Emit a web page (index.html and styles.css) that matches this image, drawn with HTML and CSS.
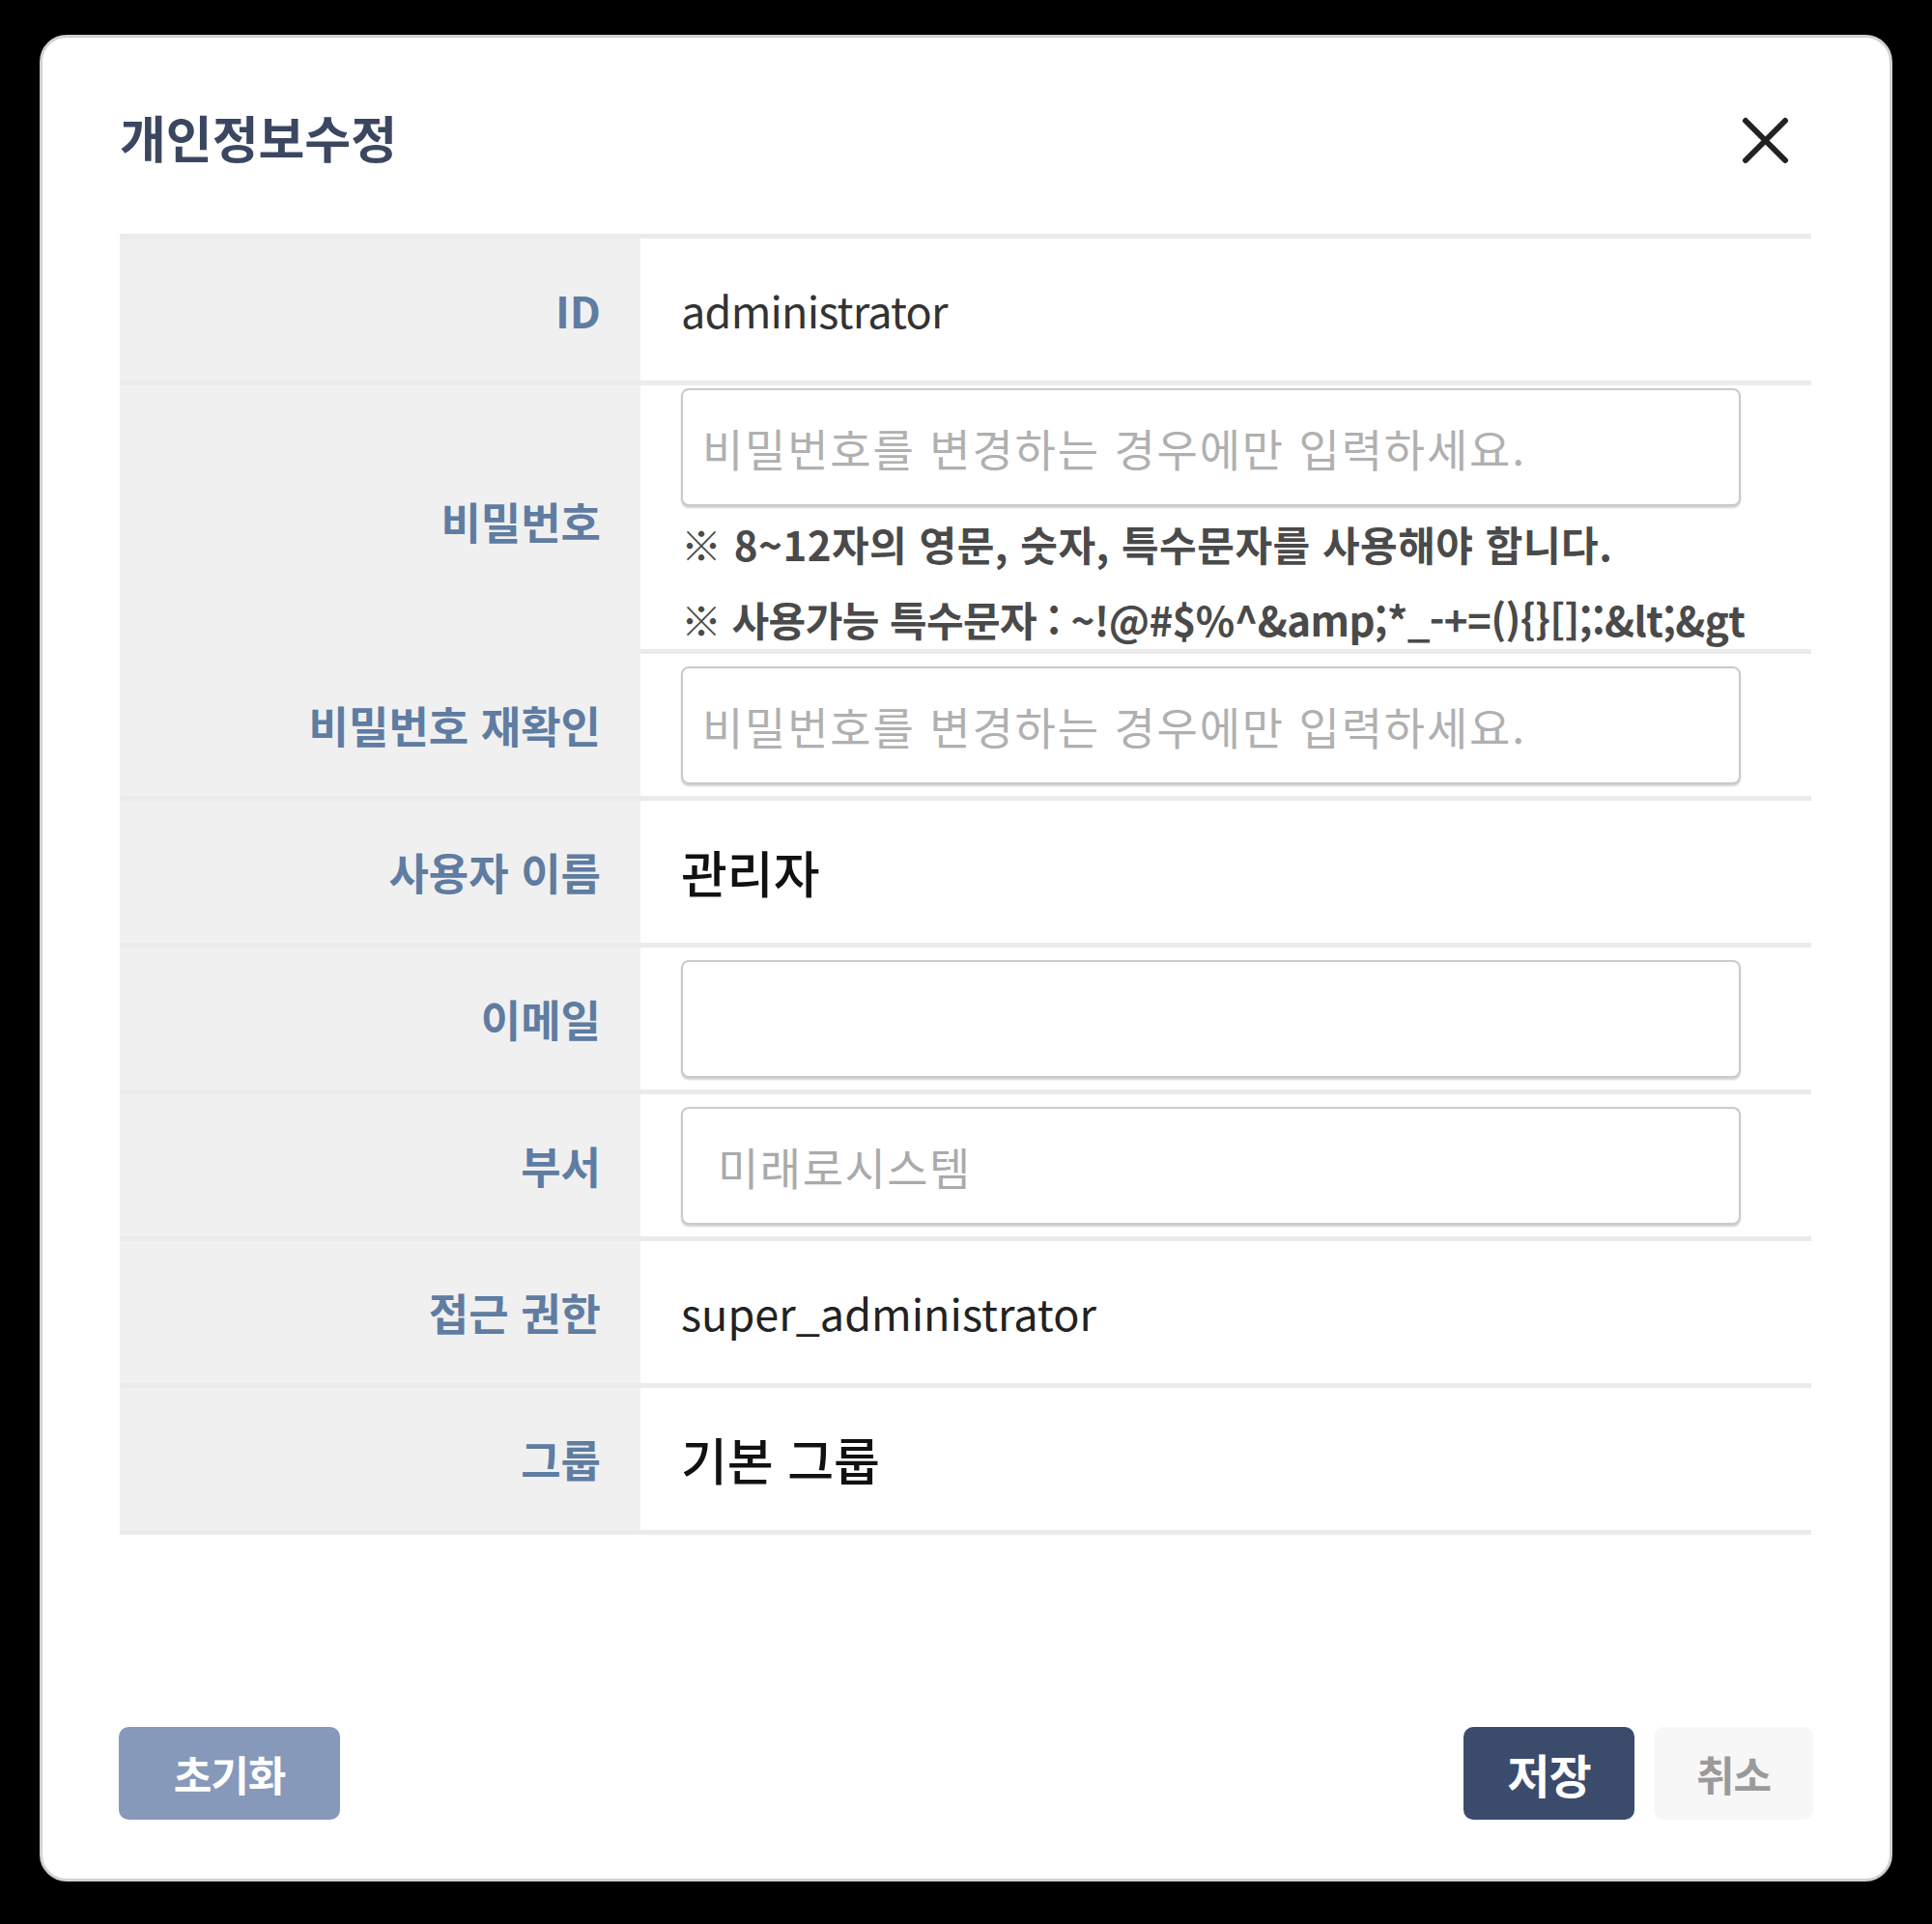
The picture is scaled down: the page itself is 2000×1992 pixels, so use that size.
FILE: index.html
```html
<!DOCTYPE html>
<html lang="ko">
<head>
<meta charset="utf-8">
<title>개인정보수정</title>
<link rel="stylesheet" href="styles.css">
</head>
<body>
<div class="modal">
  <div class="modal-header">
    <h1 class="modal-title">개인정보수정</h1>
    <button class="close-btn" type="button" aria-label="닫기">
      <svg viewBox="0 0 49 49" width="49" height="49"><path d="M4 4 L45 45 M45 4 L4 45" stroke="#222" stroke-width="6" stroke-linecap="round" fill="none"/></svg>
    </button>
  </div>
  <div class="form-table">
    <div class="row">
      <div class="label">ID</div>
      <div class="value"><span class="text-plain">administrator</span></div>
    </div>
    <div class="row row-tall">
      <div class="label">비밀번호</div>
      <div class="value value-stack">
        <input class="field" type="password" placeholder="비밀번호를 변경하는 경우에만 입력하세요.">
        <p class="help">※ 8~12자의 영문, 숫자, 특수문자를 사용해야 합니다.</p>
        <p class="help help-symbols">※ 사용가능 특수문자 : ~!@#$%^&amp;amp;*_-+=(){}[];:&amp;lt;&amp;gt</p>
      </div>
    </div>
    <div class="row">
      <div class="label">비밀번호 재확인</div>
      <div class="value"><input class="field" type="password" placeholder="비밀번호를 변경하는 경우에만 입력하세요."></div>
    </div>
    <div class="row">
      <div class="label">사용자 이름</div>
      <div class="value"><span class="text-strong">관리자</span></div>
    </div>
    <div class="row">
      <div class="label">이메일</div>
      <div class="value"><input class="field" type="text"></div>
    </div>
    <div class="row">
      <div class="label">부서</div>
      <div class="value"><input class="field field-readonly" type="text" value="미래로시스템" readonly></div>
    </div>
    <div class="row">
      <div class="label">접근 권한</div>
      <div class="value"><span class="text-plain text-role">super_administrator</span></div>
    </div>
    <div class="row">
      <div class="label">그룹</div>
      <div class="value"><span class="text-strong">기본 그룹</span></div>
    </div>
  </div>
  <div class="modal-footer">
    <button class="btn btn-reset" type="button">초기화</button>
    <div class="footer-right">
      <button class="btn btn-save" type="button">저장</button>
      <button class="btn btn-cancel" type="button">취소</button>
    </div>
  </div>
</div>
</body>
</html>
```
FILE: styles.css
```css
* {
  box-sizing: border-box;
}

html, body {
  margin: 0;
  padding: 0;
  background: #000;
}

body {
  width: 2000px;
  height: 1992px;
  padding: 36px 0 0 41px;
  font-family: "Noto Sans CJK KR", "Noto Sans", sans-serif;
}

.modal {
  width: 1918px;
  height: 1912px;
  background: #fff;
  border: 3px solid #d2d2d2;
  border-radius: 28px;
  padding: 0 81px 61px 80px;
  display: flex;
  flex-direction: column;
}

.modal-header {
  height: 203px;
  padding-top: 2px;
  display: flex;
  align-items: center;
  justify-content: space-between;
}

.modal-title {
  margin: 0;
  font-size: 52px;
  font-weight: 700;
  color: #3b4760;
  line-height: 1;
}

.close-btn {
  width: 49px;
  height: 49px;
  padding: 0;
  margin-right: 23px;
  margin-top: 8px;
  border: 0;
  background: transparent;
  display: flex;
}

.form-table {
  border-top: 5px solid #ebebeb;
}

.row {
  display: grid;
  grid-template-columns: 539px 1fr;
  height: 152px;
  border-bottom: 5px solid #ebebeb;
}

.row-tall {
  height: 278px;
}

.label {
  background: #f0f0f0;
  display: flex;
  align-items: center;
  justify-content: flex-end;
  padding-right: 41px;
  font-size: 45px;
  font-weight: 700;
  letter-spacing: 0;
  color: #5f7ca2;
}

.value {
  display: flex;
  align-items: center;
  padding-left: 42px;
}

.value-stack {
  flex-direction: column;
  align-items: flex-start;
  padding-top: 0;
}

.text-plain {
  font-size: 45px;
  color: #333;
  letter-spacing: -0.8px;
}

.text-role {
  color: #222;
  letter-spacing: 0;
}

.text-strong {
  font-size: 52px;
  font-weight: 500;
  color: #111;
}

.field {
  width: 1097px;
  height: 122px;
  border: 2px solid #cacaca;
  border-radius: 8px;
  box-shadow: 0 2px 2px rgba(0, 0, 0, 0.18);
  padding: 0 20px;
  font-family: "Noto Sans CJK KR", "Noto Sans", sans-serif;
  font-size: 46px;
  letter-spacing: 1.8px;
  color: #333;
  background: #fff;
  outline: none;
}

.field::placeholder {
  color: #b0b0b0;
}

.field-readonly {
  padding-left: 36px;
  color: #aaaaaa;
  letter-spacing: 1.5px;
}

.value-stack .field {
  margin-top: 3px;
  flex: none;
}

.help {
  margin: 0;
  font-size: 42px;
  line-height: 78px;
  font-weight: 700;
  letter-spacing: 0.5px;
  color: #4a4a4a;
  white-space: nowrap;
}

.help-symbols {
  letter-spacing: -0.6px;
}

.modal-footer {
  margin-top: auto;
  display: flex;
  justify-content: space-between;
  align-items: center;
}

.footer-right {
  display: flex;
  gap: 20px;
  margin-right: -2px;
}

.btn {
  height: 96px;
  border: 0;
  border-radius: 10px;
  font-family: "Noto Sans CJK KR", "Noto Sans", sans-serif;
  font-size: 43px;
  font-weight: 700;
  letter-spacing: -1px;
  padding: 0;
}

.btn-reset {
  width: 229px;
  background: #8699bb;
  color: #fff;
  margin-left: -1px;
}

.btn-save {
  width: 177px;
  background: #3b4b6b;
  color: #fff;
  font-size: 48px;
}

.btn-cancel {
  width: 165px;
  background: #f7f7f7;
  color: #9a9a9a;
}
```
